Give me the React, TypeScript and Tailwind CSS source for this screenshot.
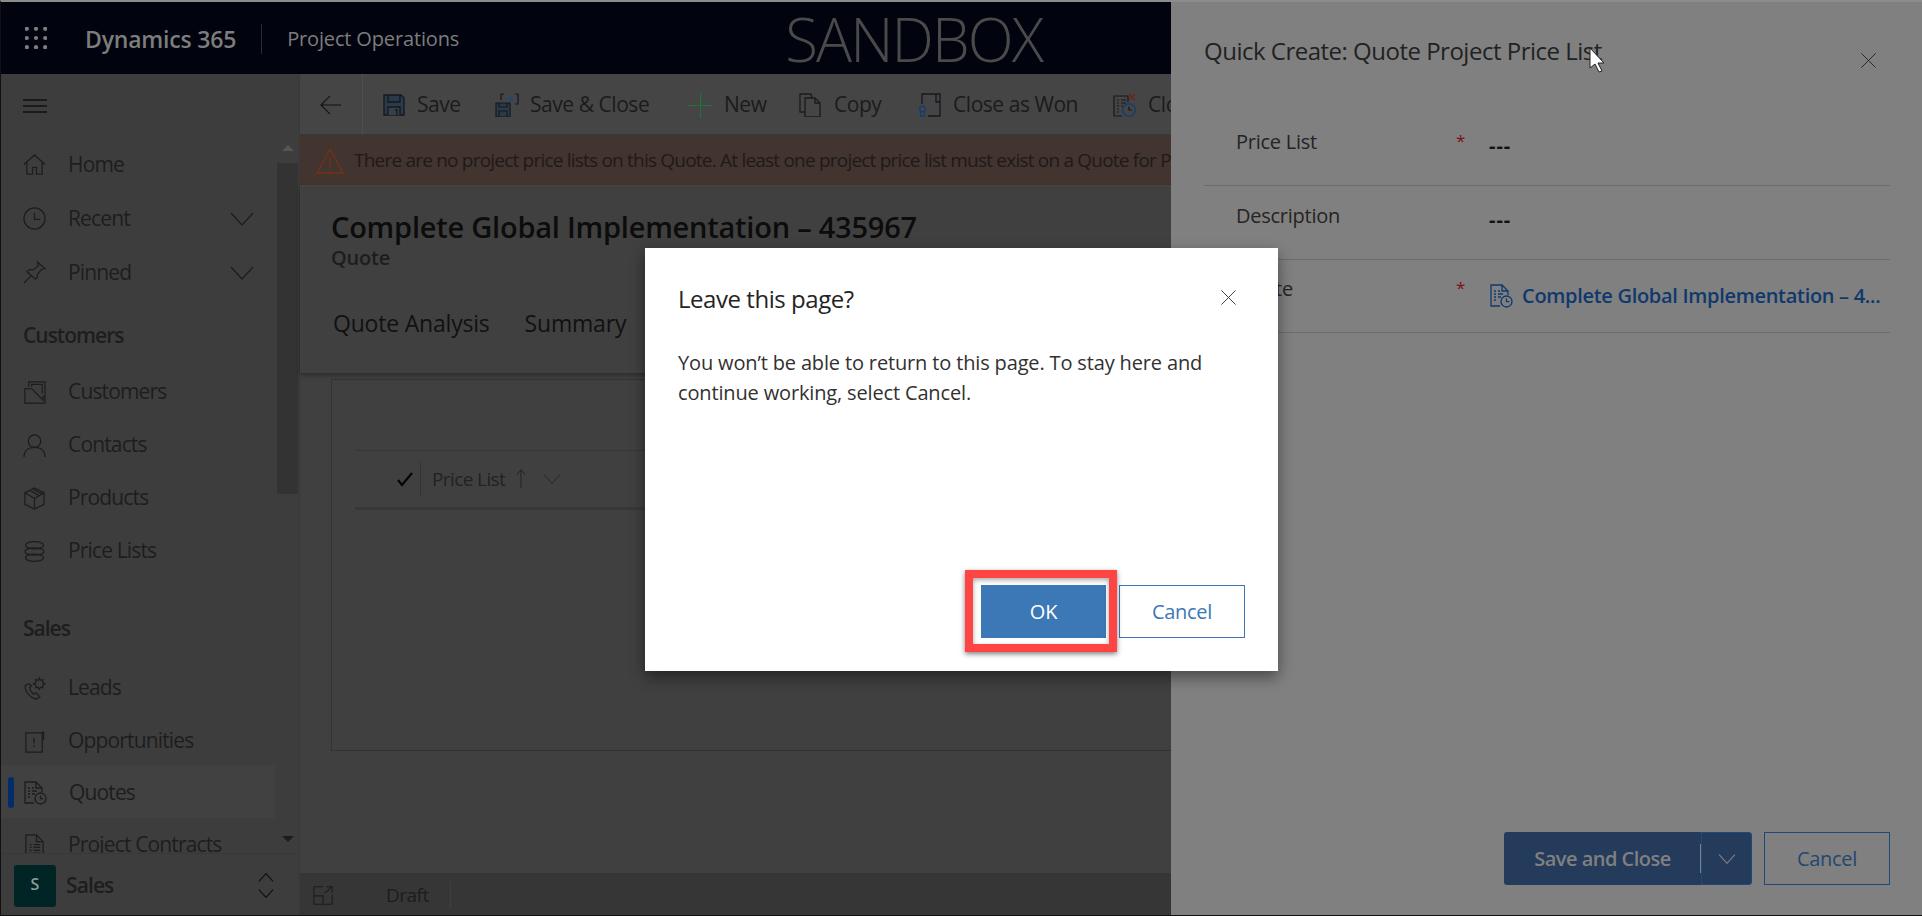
import React from 'react';

type IconProps = { className?: string };

const Svg = ({ className, children }: IconProps & { children: React.ReactNode }) => (
  <svg viewBox="0 0 24 24" fill="none" stroke="currentColor" strokeWidth="1.3" className={className}>
    {children}
  </svg>
);

const GridIcon = ({ className }: IconProps) => (
  <svg viewBox="0 0 24 24" fill="currentColor" className={className}>
    {[2, 12, 22].map((y) => [2, 12, 22].map((x) => <circle key={`${x}-${y}`} cx={x} cy={y} r="2.3" />))}
  </svg>
);
const MenuIcon = ({ className }: IconProps) => (
  <Svg className={className}><path d="M0 6h24M0 12h24M0 18h24" /></Svg>
);
const HomeIcon = ({ className }: IconProps) => (
  <Svg className={className}><path d="M1 12 12 2l11 10M4 9.5V22h6v-7h4v7h6V9.5" /></Svg>
);
const ClockIcon = ({ className }: IconProps) => (
  <Svg className={className}><circle cx="12" cy="12" r="11" /><path d="M12 6v7h6" /></Svg>
);
const PinIcon = ({ className }: IconProps) => (
  <Svg className={className}><path d="M1 23l8-8M15 1l8 7-4 1-4 5 0 3-2 2-9-8 3-2 4 0 5-4z" /></Svg>
);
const ChevronDown = ({ className }: IconProps) => (
  <svg viewBox="0 0 24 14" fill="none" stroke="currentColor" strokeWidth="1.2" className={className}><path d="M1 1l11 12L23 1" /></svg>
);
const ChevronUp = ({ className }: IconProps) => (
  <svg viewBox="0 0 24 14" fill="none" stroke="currentColor" strokeWidth="1.2" className={className}><path d="M1 13 12 1l11 12" /></svg>
);
const AccountIcon = ({ className }: IconProps) => (
  <Svg className={className}><path d="M6 6V1h17v14M9 6V3.5h11V13M2 23V8h7l12 12v-4h2v7z" /></Svg>
);
const ContactIcon = ({ className }: IconProps) => (
  <Svg className={className}><circle cx="12" cy="7.5" r="6.5" /><path d="M1 24c0-6 4-10 11-10s11 4 11 10" /></Svg>
);
const BoxIcon = ({ className }: IconProps) => (
  <Svg className={className}><path d="M12 1l10 5v12l-10 5-10-5V6zM2 6l10 6 10-6M12 12v11M7 3.5l10 5.5M10 2l10 5.2" /></Svg>
);
const StackIcon = ({ className }: IconProps) => (
  <Svg className={className}>
    <ellipse cx="12" cy="5.5" rx="9.5" ry="3.8" />
    <ellipse cx="12" cy="12" rx="10" ry="3.8" />
    <ellipse cx="12" cy="18.5" rx="9.5" ry="3.8" />
  </Svg>
);
const LeadIcon = ({ className }: IconProps) => (
  <Svg className={className}>
    <path d="M6 7 2.5 8.5C1 14 7 22 14 23l3.5-2.5-4-4-2.5 1.5C9 16 7 13 7 11l2-2z" />
    <path d="M17 1l1.2 2.4 2.6-.6-.4 2.7L23 7l-2.6 1.5.4 2.7-2.6-.6L17 13l-1.2-2.4-2.6.6.4-2.7L11 7l2.6-1.5-.4-2.7 2.6.6z" />
  </Svg>
);
const OpportunityIcon = ({ className }: IconProps) => (
  <Svg className={className}><path d="M20 3H3v20h17V10M20 10h1.5V2.5a.8.8 0 0 0-1.5 0zM11.5 8v6M11.5 16v2" /></Svg>
);
const QuoteIcon = ({ className }: IconProps) => (
  <Svg className={className}>
    <path d="M11 22H2V1h11l6 6v4M13 1v6h6M5 7h2M9 7h2M5 10h2M9 10h5M5 13h2M9 13h3M5 16h2" />
    <circle cx="17.5" cy="17.5" r="5.5" />
    <path d="M17.5 14.5v3.2h2.8" />
  </Svg>
);
const DocIcon = ({ className }: IconProps) => (
  <Svg className={className}><path d="M3 24V1h11l7 7v16M14 1v7h7M7 11h2M11 11h7M7 14h2M11 14h7M7 17h2M11 17h7M7 20h2M11 20h7" /></Svg>
);
const SaveIcon = ({ className }: IconProps) => (
  <svg viewBox="0 0 24 24" fill="none" strokeWidth="1.3" className={className}>
    <path d="M2 2h17l3 3v17H2z" stroke="#14181f" fill="#2b3a4a" />
    <path d="M6 2v7h12V2" stroke="#14181f" />
    <path d="M6 22v-8h12v8M13 17h2v5" stroke="#14181f" fill="#3a3f45" />
  </svg>
);
const SaveCloseIcon = ({ className }: IconProps) => (
  <svg viewBox="0 0 24 24" fill="none" strokeWidth="1.2" className={className}>
    <path d="M1 10h14v14H1z" stroke="#14181f" fill="#2b3a4a" />
    <path d="M4 10v4h8v-4M4 24v-6h8v6" stroke="#14181f" />
    <path d="M6 7V1h3M20 1h3v10h-3" stroke="#14181f" />
    <path d="M9 6h9M15 3l3 3-3 3" stroke="#1b4a78" />
  </svg>
);
const PlusIcon = ({ className }: IconProps) => (
  <svg viewBox="0 0 25 25" fill="none" stroke="#22703a" strokeWidth="1.2" className={className}><path d="M12.5 0v25M0 12.5h25" /></svg>
);
const CopyIcon = ({ className }: IconProps) => (
  <Svg className={className}><path d="M6 19H1V1h11l1 4M6 5h10l5 5v14H6zM16 5v5h5" /></Svg>
);
const CloseWonIcon = ({ className }: IconProps) => (
  <svg viewBox="0 0 24 24" fill="none" strokeWidth="1.3" className={className}>
    <path d="M4 11V1h18v22H10M18 1v8h2a2 2 0 0 0 2-2" stroke="#14181f" />
    <circle cx="4.5" cy="16" r="2.8" stroke="#123e6d" />
    <path d="M2.5 18.5V24l2-1.5 2 1.5v-5.5" stroke="#123e6d" />
  </svg>
);
const CloseQuoteIcon = ({ className }: IconProps) => (
  <svg viewBox="0 0 24 24" fill="none" strokeWidth="1.2" className={className}>
    <path d="M9 23H1V3h14v6M4 7h2M8 7h5M4 10h2M8 10h5M4 13h2M8 13h2M4 16h2M4 19h2" stroke="#14181f" />
    <path d="M16 1l6 6M22 1l-6 6" stroke="#6d241c" strokeWidth="1.5" />
    <circle cx="16" cy="17" r="6.3" stroke="#143f6e" strokeWidth="1.5" />
    <path d="M16 13.5V17h3" stroke="#14181f" />
  </svg>
);
const WarnIcon = ({ className }: IconProps) => (
  <svg viewBox="0 0 28 28" fill="none" stroke="#7a2f17" strokeWidth="1.3" className={className}>
    <path d="M14 2 27 26H1zM14 10v10M14 22v2" />
  </svg>
);
const CloseX = ({ className }: IconProps) => (
  <Svg className={className}><path d="M2 2l20 20M22 2 2 22" /></Svg>
);
const ExpandIcon = ({ className }: IconProps) => (
  <Svg className={className}><path d="M12 2H1v21h22V12M1 13h11v10M14 10l9-8M16 2h7v7" /></Svg>
);

type NavRow = { label: string; icon: React.ComponentType<IconProps>; chevron?: boolean };

const topRows: NavRow[] = [
  { label: 'Home', icon: HomeIcon },
  { label: 'Recent', icon: ClockIcon, chevron: true },
  { label: 'Pinned', icon: PinIcon, chevron: true },
];
const customerRows: NavRow[] = [
  { label: 'Customers', icon: AccountIcon },
  { label: 'Contacts', icon: ContactIcon },
  { label: 'Products', icon: BoxIcon },
  { label: 'Price Lists', icon: StackIcon },
];
const salesRows: NavRow[] = [
  { label: 'Leads', icon: LeadIcon },
  { label: 'Opportunities', icon: OpportunityIcon },
];

function NavItem({ label, icon: Icon, chevron, height = 'h-[53px]' }: NavRow & { height?: string }) {
  return (
    <div className={`flex shrink-0 items-center pl-[22px] pr-[23px] pt-[1px] text-[21px] tracking-[-0.85px] text-[#1d1d1d] ${height}`}>
      <Icon className="mr-[22px] h-[23px] w-[23px] shrink-0" />
      <span>{label}</span>
      {chevron && <ChevronDown className="ml-auto h-[14px] w-[24px]" />}
    </div>
  );
}

function Sidebar() {
  return (
    <aside className="flex h-full w-[299px] shrink-0 flex-col border-r border-[#383838] bg-[#3d3d3d]">
      <div className="flex h-[63px] shrink-0 items-center pl-[22px] text-[#111]">
        <MenuIcon className="h-[24px] w-[24px]" />
      </div>
      <div className="flex min-h-0 flex-1">
        <nav className="min-w-0 flex-1 overflow-hidden">
          {topRows.map((r) => <NavItem key={r.label} height="h-[54px]" {...r} />)}
          <div className="flex h-[66px] items-center pl-[22px] pt-[8px] text-[21px] font-semibold tracking-[-1px] text-[#1d1d1d]">Customers</div>
          {customerRows.map((r) => <NavItem key={r.label} {...r} />)}
          <div className="flex h-[84px] items-center pl-[22px] pt-[20px] text-[21px] font-semibold tracking-[-1px] text-[#1d1d1d]">Sales</div>
          {salesRows.map((r) => <NavItem key={r.label} {...r} />)}
          <div className="-mt-[2px] mr-[2px] flex h-[53px] items-center bg-[#414141] pl-[7px] pt-[2px] text-[21px] tracking-[-0.85px] text-[#1d1d1d]">
            <span className="mr-[9px] h-[31px] w-[6px] rounded-[3px] bg-[#032d6a]" />
            <QuoteIcon className="mr-[22px] h-[24px] w-[24px] shrink-0" />
            <span>Quotes</span>
          </div>
          <NavItem label="Project Contracts" icon={DocIcon} />
        </nav>
        <div className="mr-[1px] flex w-[21px] shrink-0 flex-col items-center pt-[8px]">
          <span className="h-0 w-0 border-x-[6px] border-b-[6px] border-x-transparent border-b-[#555]" />
          <div className="mt-[12px] h-[331px] w-full bg-[#333333]" />
          <span className="mt-[342px] h-0 w-0 border-x-[6px] border-t-[6px] border-x-transparent border-t-[#1d1d1d]" />
        </div>
      </div>
      <div className="flex h-[62px] shrink-0 items-center border-t border-[#383838] pl-[13px] pr-[25px] pt-[2px]">
        <div className="flex h-[42px] w-[42px] items-center justify-center rounded-[3px] bg-[#012425] pb-[4px] text-[16px] font-semibold text-[#8a9c9c]">S</div>
        <span className="ml-[10px] text-[21px] font-semibold tracking-[-0.9px] text-[#1d1d1d]">Sales</span>
        <div className="ml-auto flex flex-col gap-[7px] text-[#111]">
          <ChevronUp className="h-[9px] w-[16px] [stroke-width:1.9]" />
          <ChevronDown className="h-[9px] w-[16px] [stroke-width:1.9]" />
        </div>
      </div>
    </aside>
  );
}

function CommandItem({ icon, label, width }: { icon: React.ReactNode; label: string; width: string }) {
  return (
    <div className="flex items-center gap-[11px] whitespace-nowrap">
      {icon}
      <span className={width}>{label}</span>
    </div>
  );
}

function CommandBar() {
  return (
    <div className="flex h-[62px] shrink-0 items-center border-b-2 border-[#383838] bg-[#454545] text-[21px] tracking-[-0.45px] text-[#1b1b1b]">
      <div className="flex h-full w-[63px] shrink-0 items-center justify-center border-r border-[#505050] pt-[2px] text-[#111]">
        <svg viewBox="0 0 24 24" fill="none" stroke="currentColor" strokeWidth="1.2" className="h-[22px] w-[22px]"><path d="M1 12h22M11 2 1 12l10 10" /></svg>
      </div>
      <div className="ml-[19px] flex items-center gap-[36px] pt-[2px]">
        <CommandItem icon={<SaveIcon className="h-[24px] w-[24px]" />} label="Save" width="w-[42px]" />
        <CommandItem icon={<SaveCloseIcon className="h-[24px] w-[24px]" />} label="Save & Close" width="w-[122px]" />
        <CommandItem icon={<PlusIcon className="h-[25px] w-[25px]" />} label="New" width="w-[39px]" />
        <CommandItem icon={<CopyIcon className="h-[24px] w-[24px]" />} label="Copy" width="w-[48px]" />
        <CommandItem icon={<CloseWonIcon className="h-[24px] w-[24px]" />} label="Close as Won" width="w-[124px]" />
        <CommandItem icon={<CloseQuoteIcon className="h-[24px] w-[24px]" />} label="Close as Lost" width="w-[124px]" />
      </div>
    </div>
  );
}

function MainContent() {
  return (
    <main className="flex h-full min-w-0 flex-1 flex-col bg-[#404040]">
      <CommandBar />
      <div className="flex h-[50px] shrink-0 items-center gap-[10px] overflow-hidden whitespace-nowrap border-b border-[#4a4a4a] bg-[#42342f] pl-[16px] text-[19px] tracking-[-0.79px] text-[#1f1a18]">
        <WarnIcon className="h-[28px] w-[28px] shrink-0" />
        <span>There are no project price lists on this Quote. At least one project price list must exist on a Quote for Project Based Lines.</span>
      </div>
      <header className="relative h-[187px] shrink-0 pl-[31px] pt-[23px] text-[#0c0c0c] shadow-[0_2px_5px_rgba(0,0,0,0.35)]">
        <h1 className="text-[29px] font-semibold leading-[36px] tracking-[-0.23px]">Complete Global Implementation – 435967</h1>
        <p className="mt-[1px] text-[20px] font-semibold leading-[24px] tracking-[-0.2px] text-[#1d1d1d]">Quote</p>
        <div className="mt-[38px] flex gap-[35px] pl-[2px] text-[23px] leading-[30px] tracking-[-0.2px] text-[#111]">
          <span>Quote Analysis</span>
          <span>Summary</span>
        </div>
      </header>
      <section className="min-h-0 flex-1 pl-[31px] pt-[6px]">
        <div className="h-[372px] border-b border-l border-t border-[#333] pl-[23px] pt-[70px]">
          <div className="border-t border-[#373737]">
            <div className="flex h-[59px] items-center border-b-[3px] border-[#383838] pl-[42px] text-[19px] tracking-[-0.6px] text-[#222]">
              <svg viewBox="0 0 16 16" fill="none" stroke="#050505" strokeWidth="2.2" className="h-[16px] w-[16px]"><path d="M1 9l4 5L15 2" /></svg>
              <span className="ml-[7px] h-[36px] w-px bg-[#333]" />
              <span className="ml-[11px]">Price List</span>
              <svg viewBox="0 0 12 24" fill="none" stroke="#222" strokeWidth="1.2" className="ml-[11px] h-[22px] w-[10px]"><path d="M6 23V1M1 7l5-6 5 6" /></svg>
              <ChevronDown className="ml-[17px] h-[10px] w-[18px] text-[#222]" />
            </div>
          </div>
        </div>
      </section>
      <footer className="flex h-[42px] shrink-0 items-center bg-[#363636] pl-[13px] pt-[2px] text-[19px] tracking-[-0.5px] text-[#1d1d1d]">
        <ExpandIcon className="h-[20px] w-[20px]" />
        <span className="ml-[53px]">Draft</span>
        <span className="ml-[21px] h-[26px] w-px bg-[#3f3f3f]" />
      </footer>
    </main>
  );
}

function PanelRow({ label, required, children, height }: { label: string; required?: boolean; children: React.ReactNode; height: string }) {
  return (
    <div className={`flex items-center border-b border-[#6c6c6c] pl-[32px] ${height}`}>
      <span className="w-[220px] shrink-0 -translate-y-[7px] text-[20px] tracking-[-0.25px] text-[#242424]">{label}</span>
      <span className="w-[33px] shrink-0 -translate-y-[8px] text-[17px] text-[#7a1212]">{required ? '*' : ''}</span>
      {children}
    </div>
  );
}

function QuickCreatePanel() {
  return (
    <aside className="absolute bottom-0 right-0 top-0 flex w-[751px] flex-col bg-[#808080] pl-[33px] pr-[32px]">
      <div className="flex h-[111px] shrink-0 items-start justify-between">
        <h2 className="mt-[31px] text-[24px] leading-[36px] tracking-[-0.5px] text-[#222]">Quick Create: Quote Project Price List</h2>
        <CloseX className="mr-[13px] mt-[50px] h-[17px] w-[17px] text-[#222]" />
      </div>
      <PanelRow label="Price List" required height="h-[73px]">
        <span className="-translate-y-[3px] text-[20px] font-bold tracking-[1px] text-[#111]">---</span>
      </PanelRow>
      <PanelRow label="Description" height="h-[74px]">
        <span className="-translate-y-[3px] text-[20px] font-bold tracking-[1px] text-[#111]">---</span>
      </PanelRow>
      <PanelRow label="Quote" required height="h-[73px]">
        <QuoteIcon className="h-[24px] w-[24px] shrink-0 text-[#0f386c]" />
        <span className="ml-[9px] whitespace-nowrap text-[20px] font-semibold tracking-[-0.3px] text-[#0f386c]">Complete Global Implementation – 4...</span>
      </PanelRow>
      <div className="mt-auto flex h-[83px] shrink-0 items-start justify-end">
        <div className="relative flex h-[53px] w-[197px] items-center justify-center rounded-l-[3px] bg-[#243b5c] text-[20px] font-semibold tracking-[-0.5px] text-[#808080]">
          Save and Close
          <span className="absolute right-0 top-[12px] h-[29px] w-px bg-[#808080]" />
        </div>
        <div className="flex h-[53px] w-[51px] items-center justify-center rounded-r-[3px] border border-[#1f4a78] bg-[#243b5c] text-[#808080]">
          <ChevronDown className="h-[10px] w-[18px] [stroke-width:1.6]" />
        </div>
        <div className="ml-[12px] flex h-[53px] w-[126px] items-center justify-center border border-[#1f4a78] text-[20px] tracking-[-0.3px] text-[#25476f]">Cancel</div>
      </div>
    </aside>
  );
}

function LeaveDialog() {
  return (
    <div className="absolute left-[644px] top-[246px] flex h-[423px] w-[633px] flex-col bg-white pl-[33px] pr-[33px] shadow-[0_6px_14px_rgba(0,0,0,0.45)]">
      <div className="flex items-start justify-between pt-[31px]">
        <h2 className="text-[24px] leading-[40px] tracking-[-0.45px] text-[#252423]">Leave this page?</h2>
        <CloseX className="mr-[8px] mt-[10px] h-[17px] w-[17px] text-[#333]" />
      </div>
      <p className="mt-[29px] w-[540px] text-[20px] leading-[30px] tracking-[-0.15px] text-[#323130]">
        You won’t be able to return to this page. To stay here and continue working, select Cancel.
      </p>
      <div className="mb-[33px] mt-auto flex justify-end gap-[13px]">
        <div className="relative flex h-[53px] w-[125px] items-center justify-center bg-[#3b78b5] text-[20px] tracking-[-0.2px] text-white">
          OK
          <span className="absolute -bottom-[14px] -left-[16px] -right-[11px] -top-[15px] border-[8px] border-[#ff4444] shadow-[0_2px_5px_rgba(0,0,0,0.5),inset_0_2px_5px_rgba(0,0,0,0.35)]" />
        </div>
        <div className="flex h-[53px] w-[126px] items-center justify-center border border-[#3b78b5] text-[20px] tracking-[-0.3px] text-[#3b78b5]">Cancel</div>
      </div>
    </div>
  );
}

export default function App() {
  return (
    <div className="relative flex h-[916px] w-[1922px] flex-col overflow-hidden border-b border-l border-t-2 border-b-[#111] border-l-[#111] border-t-[#8c8c8c] bg-[#404040] font-['Open_Sans','Liberation_Sans',sans-serif]">
      <div className="flex h-[72px] shrink-0 items-center overflow-hidden bg-[#01040f] pt-[2px] text-[#7d7d7d]">
        <GridIcon className="-mt-[2px] ml-[24px] h-[22px] w-[22px]" />
        <span className="ml-[38px] text-[23px] font-semibold tracking-[-0.2px]">Dynamics 365</span>
        <span className="ml-[25px] h-[30px] w-px bg-[#2b2d36]" />
        <span className="ml-[25px] text-[20px] tracking-[-0.15px]">Project Operations</span>
        <span className="ml-[326px] text-[60px] font-light leading-none tracking-[-1.9px] text-[#4a4a4a]">SANDBOX</span>
      </div>
      <div className="flex min-h-0 flex-1">
        <Sidebar />
        <MainContent />
      </div>
      <QuickCreatePanel />
      <LeaveDialog />
      {/* mouse pointer left over the panel title */}
      <svg viewBox="0 0 16 26" className="absolute left-[1588px] top-[45px] h-[26px] w-[16px]">
        <path d="M1 1v20l5-4 4 8 3-1-4-8h6z" fill="#fff" stroke="#222" strokeWidth="1" />
      </svg>
    </div>
  );
}
